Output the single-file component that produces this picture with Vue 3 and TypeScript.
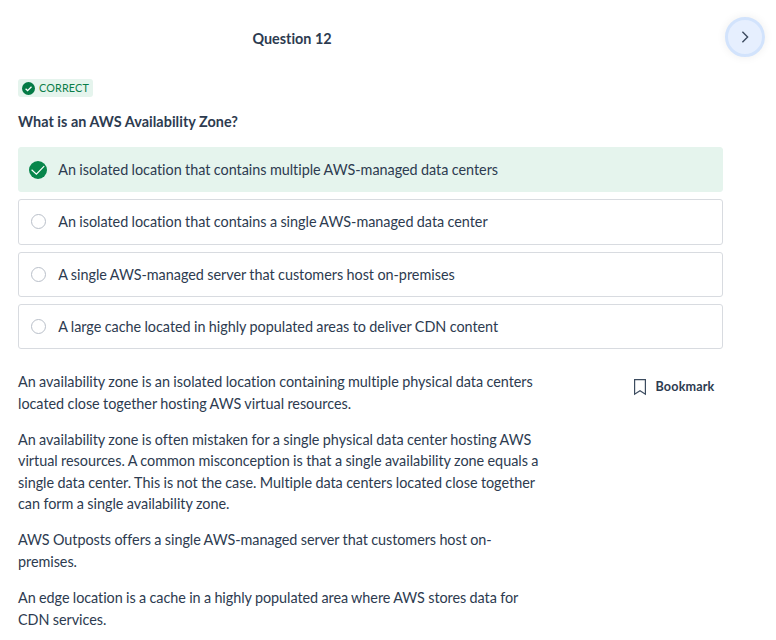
<script setup lang="ts">
import { ref } from 'vue'

interface Option {
  text: string
  correct: boolean
}

const questionNumber = ref<number>(12)

const options: Option[] = [
  { text: 'An isolated location that contains multiple AWS-managed data centers', correct: true },
  { text: 'An isolated location that contains a single AWS-managed data center', correct: false },
  { text: 'A single AWS-managed server that customers host on-premises', correct: false },
  { text: 'A large cache located in highly populated areas to deliver CDN content', correct: false },
]

const explanation: string[] = [
  'An availability zone is an isolated location containing multiple physical data centers located close together hosting AWS virtual resources.',
  'An availability zone is often mistaken for a single physical data center hosting AWS virtual resources. A common misconception is that a single availability zone equals a single data center. This is not the case. Multiple data centers located close together can form a single availability zone.',
  'AWS Outposts offers a single AWS-managed server that customers host on-premises.',
  'An edge location is a cache in a highly populated area where AWS stores data for CDN services.',
]
</script>

<template>
  <main class="quiz">
    <header class="top">
      <h1 class="title">Question {{ questionNumber }}</h1>
      <button class="next" type="button">
        <svg width="16" height="16" viewBox="0 0 16 16" fill="none" stroke="#3c4b5f" stroke-width="1.4">
          <path d="M5.4 2.8 10.6 8 5.4 13.2" />
        </svg>
      </button>
    </header>

    <section class="content">
      <span class="badge">
        <svg width="13" height="13" viewBox="0 0 13 13">
          <circle cx="6.5" cy="6.5" r="6.5" fill="#047a45" />
          <path d="M3.6 6.8 5.6 8.7 9.5 4.8" fill="none" stroke="#fff" stroke-width="1.3" />
        </svg>
        <span>CORRECT</span>
      </span>

      <h2 class="prompt">What is an AWS Availability Zone?</h2>

      <ul class="options">
        <li v-for="option in options" :key="option.text" class="option" :class="{ correct: option.correct }">
          <span class="mark">
            <svg v-if="option.correct" width="18" height="18" viewBox="0 0 18 18">
              <circle cx="9" cy="9" r="9" fill="#07864b" />
              <path d="M2.6 8.8 7.4 13.2 15.2 5.1" fill="none" stroke="#fff" stroke-width="1.2" />
            </svg>
            <span v-else class="radio"></span>
          </span>
          <span>{{ option.text }}</span>
        </li>
      </ul>

      <div class="details">
        <div class="explanation">
          <p v-for="paragraph in explanation" :key="paragraph">{{ paragraph }}</p>
        </div>
        <button class="bookmark" type="button">
          <svg width="14" height="18" viewBox="0 0 14 18" fill="none" stroke="#3c4b5f" stroke-width="1.2">
            <path d="M1.6 1.6H12.4V16.2L7 12.8 1.6 16.2Z" />
          </svg>
          <span>Bookmark</span>
        </button>
      </div>
    </section>
  </main>
</template>

<style>
body {
  background: #fff;
  overflow: hidden;
}
</style>

<style scoped>
.quiz {
  box-sizing: border-box;
  width: 776px;
  height: 640px;
  overflow: hidden;
  font-family: Lato, "Liberation Sans", sans-serif;
  font-size: 14.4px;
  line-height: 21.6px;
  font-variant-ligatures: none;
  color: #2d3b50;
}
.top {
  display: grid;
  grid-template-columns: 584px 1fr;
  align-items: center;
  height: 75px;
}
.title {
  margin: 2px 0 0;
  font-size: 14.4px;
  font-weight: 700;
  text-align: center;
}
.next {
  box-sizing: border-box;
  display: flex;
  align-items: center;
  justify-content: center;
  justify-self: end;
  width: 40px;
  height: 40px;
  margin: -1px 11px 0 0;
  padding: 0;
  border: 3px solid #d2e3fc;
  border-radius: 50%;
  background: #e6effe;
  box-shadow: 0 0 10px rgba(0, 0, 0, 0.07);
}
.content {
  width: 705px;
  padding: 4px 0 0 18px;
}
.badge {
  display: flex;
  align-items: center;
  gap: 4px;
  box-sizing: border-box;
  width: 75px;
  height: 18px;
  padding-left: 4px;
  border-radius: 3px;
  background: #e5f4ed;
  color: #0a7d48;
  font-size: 10.8px;
  line-height: 18px;
  letter-spacing: 0.15px;
}
.prompt {
  margin: 14px 0 14.4px;
  font-size: 14.4px;
  font-weight: 700;
  letter-spacing: 0.035px;
}
.options {
  display: grid;
  gap: 7.2px;
  margin: 0;
  padding: 0;
  list-style: none;
  letter-spacing: -0.02px;
  word-spacing: -0.28px;
}
.option {
  box-sizing: border-box;
  display: flex;
  align-items: center;
  height: 45.2px;
  padding-left: 10px;
  border: 1px solid #d8dbe0;
  border-radius: 3px;
}
.option.correct {
  border-color: #e5f4ed;
  background: #e5f4ed;
}
.mark {
  display: flex;
  align-items: center;
  justify-content: center;
  width: 18px;
  margin-right: 11.2px;
}
.radio {
  box-sizing: border-box;
  width: 15px;
  height: 15px;
  margin-left: 1px;
  border: 1px solid #b9bfc9;
  border-radius: 50%;
}
.details {
  display: flex;
  justify-content: space-between;
  align-items: flex-start;
  padding-top: 21.8px;
}
.explanation {
  width: 526px;
  letter-spacing: -0.02px;
  word-spacing: -0.26px;
}
.explanation p {
  margin: 0 0 14.4px;
}
.explanation p:nth-child(n + 3) {
  letter-spacing: -0.05px;
}
.bookmark {
  display: flex;
  align-items: center;
  gap: 9px;
  margin: 4.8px 8.5px 0 0;
  padding: 0;
  border: 0;
  background: none;
  color: #2d3b50;
  font: 700 12.6px/21.6px Lato, sans-serif;
  letter-spacing: 0.15px;
}
</style>
